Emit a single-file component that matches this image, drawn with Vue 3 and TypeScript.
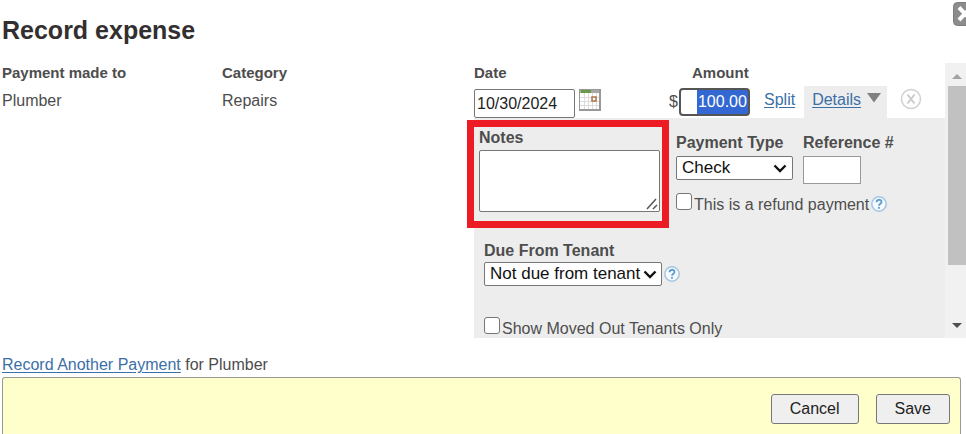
<script setup lang="ts">
import { onMounted, ref } from 'vue'

const payee = 'Plumber'
const category = 'Repairs'
const date = ref('10/30/2024')
const amount = ref('100.00')
const notes = ref('')
const paymentType = ref('Check')
const paymentTypes: string[] = ['Check', 'Cash', 'Credit Card']
const reference = ref('')
const isRefund = ref(false)
const dueFrom = ref('Not due from tenant')
const dueOptions: string[] = ['Not due from tenant', 'Due from tenant']
const movedOutOnly = ref(false)

const amountInput = ref<HTMLInputElement | null>(null)

onMounted(() => {
  amountInput.value?.focus()
  amountInput.value?.select()
})
</script>

<template>
  <main class="dialog">
    <header class="head">
      <h1>Record expense</h1>
      <button class="close" type="button" aria-label="Close">
        <svg viewBox="0 0 24 24" width="24" height="24">
          <rect x="0.5" y="0.5" width="23" height="23" rx="4" fill="#8c8c8c" stroke="#7c7c7c" />
          <path d="M6 5.500 L18 18 M18 5.500 L6 18" stroke="#fff" stroke-width="4" fill="none" />
        </svg>
      </button>
    </header>

    <section class="scroll">
      <div class="expense">
        <div class="cell">
          <h2>Payment made to</h2>
          <p>{{ payee }}</p>
        </div>
        <div class="cell">
          <h2>Category</h2>
          <p>{{ category }}</p>
        </div>
        <div class="entry">
          <div class="entry-row">
            <div class="date-field">
              <label class="col-label" for="date">Date</label>
              <div class="controls">
                <input id="date" v-model="date" class="box date" type="text" />
                <button class="plain" type="button" aria-label="Choose date">
                  <svg viewBox="0 0 22 22" width="22" height="22">
                    <rect width="22" height="22" fill="#999" />
                    <rect x="1" y="1" width="19" height="19" fill="#fff" />
                    <path d="M1 8.500H20M1 12.500H20M1 16.500H20M5.500 4V20M9.500 4V20M13.500 4V20M17.500 4V20" stroke="#dcdcdc" />
                    <rect x="1" y="1" width="19" height="3" fill="#a8a8a8" />
                    <rect x="2" y="1" width="10" height="3" fill="#6c9848" />
                    <rect x="13" y="8" width="4" height="4" fill="#fff" stroke="#b0724a" stroke-width="1.500" />
                  </svg>
                </button>
              </div>
            </div>
            <div class="amount-field">
              <label class="col-label amount-label" for="amount">Amount</label>
              <div class="money">
                <span>$</span>
                <input id="amount" ref="amountInput" v-model="amount" class="amount" type="text" />
              </div>
            </div>
            <a class="split" href="#split">Split</a>
            <div class="tab">
              <a href="#details">Details</a>
              <svg viewBox="0 0 14 10" width="14" height="10" aria-hidden="true">
                <path d="M0 0H14L7 9.500Z" fill="#808080" />
              </svg>
            </div>
            <button class="plain remove" type="button" aria-label="Remove">
              <svg viewBox="0 0 22 22" width="22" height="22">
                <circle cx="11" cy="11" r="9.500" fill="#fff" stroke="#d0d0d0" stroke-width="1.500" />
                <path d="M7.500 6.500L14.500 15.500M14.500 6.500L7.500 15.500" stroke="#cbcbcb" stroke-width="2" />
              </svg>
            </button>
          </div>

          <div class="details">
            <div class="details-top">
              <div class="notes">
                <label for="notes">Notes</label>
                <div class="notes-box">
                  <textarea id="notes" v-model="notes"></textarea>
                  <svg class="grip" viewBox="0 0 12 12" width="12" height="12" aria-hidden="true">
                    <path d="M1 11L10 1M7 11L11 7" stroke="#555" stroke-width="1.500" />
                  </svg>
                </div>
              </div>
              <div class="payment">
                <div class="pair">
                  <div class="field">
                    <label for="ptype">Payment Type</label>
                    <div class="select type-select">
                      <select id="ptype" v-model="paymentType">
                        <option v-for="t in paymentTypes" :key="t">{{ t }}</option>
                      </select>
                      <svg viewBox="0 0 14 9" width="14" height="9" aria-hidden="true">
                        <path d="M1.500 1.500L7 7L12.500 1.500" stroke="#111" stroke-width="2.400" fill="none" />
                      </svg>
                    </div>
                  </div>
                  <div class="field">
                    <label for="refno">Reference #</label>
                    <input id="refno" v-model="reference" class="refno" type="text" />
                  </div>
                </div>
                <div class="check">
                  <input id="refund" v-model="isRefund" type="checkbox" />
                  <label for="refund">This is a refund payment</label>
                  <svg class="help" viewBox="0 0 16 16" width="16" height="16" role="img" aria-label="Help">
                    <circle cx="8" cy="8" r="7.200" fill="#f4faff" stroke="#a3c6e2" stroke-width="1.500" />
                    <path d="M5.500 6.200C5.500 3 10.500 3 10.500 6C10.500 7.800 8 7.800 8 9.800M8 11V12.800" stroke="#5f9bcb" stroke-width="1.800" fill="none" />
                  </svg>
                </div>
              </div>
            </div>
            <div class="tenant">
              <label for="due">Due From Tenant</label>
              <div class="due">
                <div class="select due-select">
                  <select id="due" v-model="dueFrom">
                    <option v-for="d in dueOptions" :key="d">{{ d }}</option>
                  </select>
                  <svg viewBox="0 0 14 9" width="14" height="9" aria-hidden="true">
                    <path d="M1.500 1.500L7 7L12.500 1.500" stroke="#111" stroke-width="2.400" fill="none" />
                  </svg>
                </div>
                <svg class="help" viewBox="0 0 16 16" width="16" height="16" role="img" aria-label="Help">
                  <circle cx="8" cy="8" r="7.200" fill="#f4faff" stroke="#a3c6e2" stroke-width="1.500" />
                  <path d="M5.500 6.200C5.500 3 10.500 3 10.500 6C10.500 7.800 8 7.800 8 9.800M8 11V12.800" stroke="#5f9bcb" stroke-width="1.800" fill="none" />
                </svg>
              </div>
            </div>
            <div class="check moved">
              <input id="moved" v-model="movedOutOnly" type="checkbox" />
              <label for="moved">Show Moved Out Tenants Only</label>
            </div>
          </div>
        </div>
      </div>
      <div class="bar" aria-hidden="true">
        <svg viewBox="0 0 10 5" width="10" height="5"><path d="M0 5H10L5 0Z" fill="#a3a3a3" /></svg>
        <div class="track"><div class="thumb"></div></div>
        <svg viewBox="0 0 10 5" width="10" height="5"><path d="M0 0H10L5 5Z" fill="#505050" /></svg>
      </div>
    </section>

    <p class="another"><a href="#another">Record Another Payment</a> for {{ payee }}</p>

    <footer class="actions">
      <button class="btn" type="button">Cancel</button>
      <button class="btn" type="button">Save</button>
    </footer>
  </main>
</template>

<style>
body {
  background: #fff;
}
</style>

<style scoped>
* {
  box-sizing: border-box;
}
.dialog {
  display: flex;
  flex-direction: column;
  height: 100vh;
  overflow: hidden;
  color: #4d4d4d;
  font-family: "Liberation Sans", Arial, sans-serif;
  font-size: 16px;
  line-height: 20px;
}
h1, h2, p {
  margin: 0;
}
a {
  color: #3b6fa8;
  text-underline-offset: 2px;
}
input, textarea, select, button {
  margin: 0;
  font-family: inherit;
  font-size: 16px;
  color: #222;
}
svg {
  display: block;
  flex: none;
}
.head {
  display: flex;
  flex: none;
  justify-content: space-between;
  align-items: flex-start;
  height: 63px;
  padding: 2px 0 0 2px;
}
h1 {
  padding-top: 14px;
  font-size: 25px;
  line-height: 28px;
  color: #332f30;
}
.close, .plain {
  padding: 0;
  border: 0;
  background: none;
}
.close {
  margin-right: -11px;
}
.scroll {
  display: flex;
  flex: none;
}
.expense {
  display: grid;
  flex: 1;
  grid-template-columns: 220px 252px 1fr;
  padding-left: 2px;
}
h2, .col-label {
  display: block;
  font-size: 15px;
  font-weight: bold;
  line-height: 20px;
}
.cell p {
  margin-top: 8px;
}
.entry-row {
  display: flex;
  align-items: flex-end;
  height: 55px;
}
.date-field {
  width: 195px;
  height: 55px;
}
.controls {
  display: flex;
  align-items: flex-start;
  gap: 4px;
  padding-top: 6px;
}
.box {
  height: 29px;
  border: 1px solid #777;
  border-radius: 2px;
}
.date {
  width: 101px;
  padding: 0 2px;
}
.amount-field {
  width: 81px;
  height: 55px;
}
.amount-label {
  padding-left: 23px;
}
.money {
  display: flex;
  align-items: center;
  gap: 1px;
  padding-top: 5px;
}
.amount {
  width: 71px;
  height: 28px;
  padding: 0 1px 1px 0;
  border: 2px solid #555;
  border-radius: 4px;
  outline: none;
  text-align: right;
}
.amount:focus {
  background: linear-gradient(#3367d1, #3367d1) right / 51px 100% no-repeat #fff;
}
.amount::selection {
  color: #fff;
  background: #3367d1;
}
.split {
  margin: 0 9px 8px 14px;
}
.tab {
  display: flex;
  gap: 6px;
  width: 83px;
  height: 32px;
  padding: 4px 0 0 8px;
  background: #ededed;
}
.tab svg {
  margin-top: 3px;
}
.remove {
  margin: 0 0 8px 13px;
}
.details {
  padding-top: 2px;
  background: #ededed;
}
.details label {
  font-weight: bold;
}
.details-top {
  display: flex;
  gap: 7px;
}
.notes {
  width: 202px;
  height: 108px;
  margin-left: -7px;
  padding: 1px 2px 0 5px;
  border: 7px solid #ed1c24;
}
.notes label, .field label, .tenant label {
  display: block;
}
.notes-box {
  display: grid;
  margin-top: 2px;
}
.notes-box > * {
  grid-area: 1 / 1;
}
textarea {
  width: 100%;
  height: 62px;
  padding: 2px;
  border: 1px solid #777;
  border-radius: 2px;
  resize: none;
  background: #fff;
}
.grip {
  place-self: end;
  margin: 0 2px 2px 0;
  pointer-events: none;
}
.pair {
  display: flex;
  gap: 10px;
  padding-top: 13px;
}
.type-select {
  width: 117px;
}
.select {
  display: grid;
  align-items: center;
  margin-top: 3px;
}
.select > * {
  grid-area: 1 / 1;
}
.select svg {
  justify-self: end;
  margin-right: 6px;
  pointer-events: none;
}
select {
  width: 100%;
  height: 24px;
  padding: 0 5px;
  border: 1px solid #777;
  border-radius: 2px;
  background: #fff;
  color: #111;
  font-size: 17px;
  line-height: 20px;
  appearance: none;
}
.refno {
  display: block;
  width: 58px;
  height: 28px;
  margin-top: 3px;
  border: 1px solid #999;
}
.check {
  display: flex;
  align-items: flex-start;
  gap: 2px;
}
.check label {
  padding-top: 2px;
  font-weight: normal;
}
.payment .check {
  margin-top: 9px;
}
.check input {
  width: 16px;
  height: 17px;
  border: 1px solid #767676;
  border-radius: 3px;
  background: #fff;
  appearance: none;
}
.check input:checked {
  background: #3367d1;
}
.check .help {
  margin-top: 3px;
}
.tenant {
  padding: 13px 0 0 10px;
}
.tenant .select {
  margin-top: 1px;
}
.due {
  display: flex;
  align-items: center;
  gap: 2px;
}
.due-select {
  width: 178px;
}
.due-select svg {
  margin-right: 5px;
}
.moved {
  padding: 31px 0 0 10px;
}
.moved label {
  line-height: 19px;
}
.bar {
  display: flex;
  flex-direction: column;
  align-items: center;
  width: 21px;
  padding: 11px 0 10px 3px;
  background: #f1f1f1;
}
.track {
  flex: 1;
  align-self: stretch;
  padding: 7px 0;
}
.thumb {
  height: 78%;
  background: #c1c1c1;
}
.another {
  flex: none;
  padding: 17px 2px 2px;
}
.actions {
  display: flex;
  flex: 1;
  align-items: flex-start;
  justify-content: flex-end;
  gap: 17px;
  margin: 0 5px 0 2px;
  padding: 16px 10px 0;
  border: 1px solid #999;
  border-bottom: 0;
  border-radius: 3px 3px 0 0;
  background: #ffffcc;
}
.btn {
  height: 30px;
  padding: 0 18px;
  border: 1px solid #777;
  border-radius: 3px;
  background: #efefef;
}
</style>
